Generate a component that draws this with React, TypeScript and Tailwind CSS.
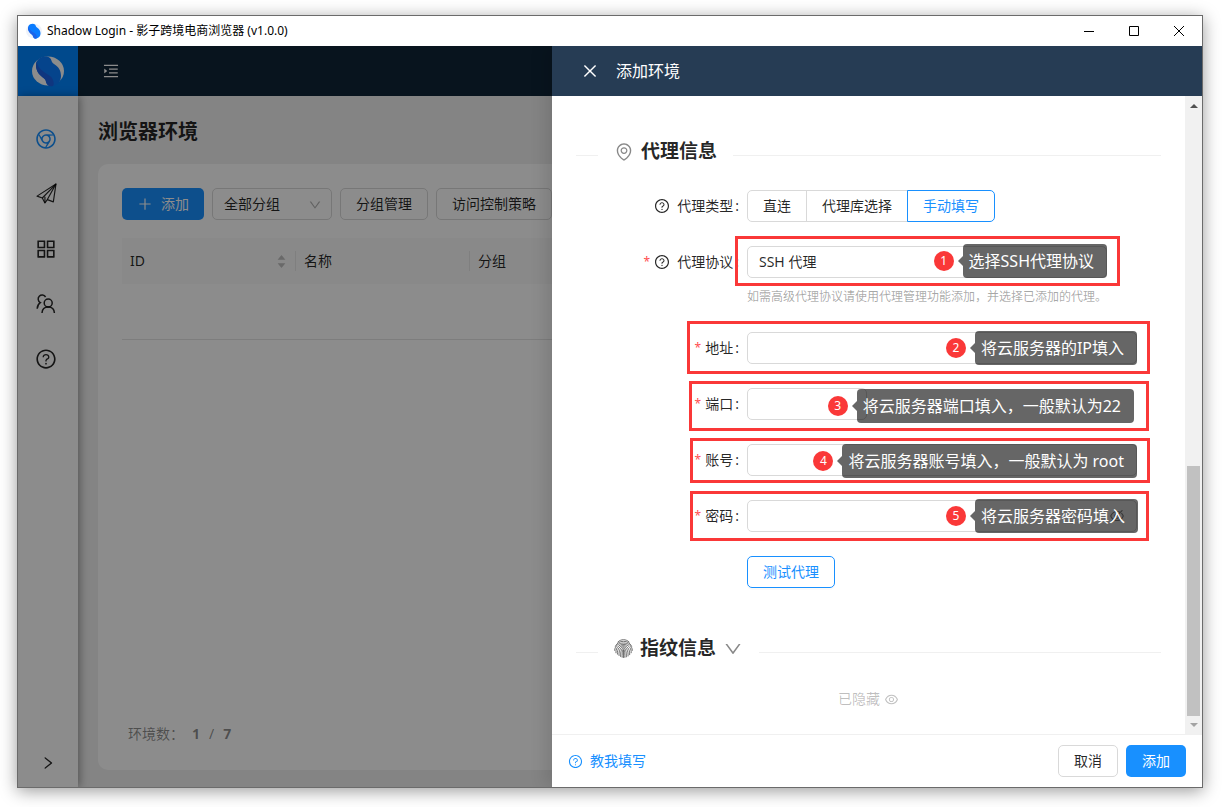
import type { ReactNode } from "react";
import {
  AiFillCaretDown,
  AiFillCaretUp,
  AiOutlineAppstore,
  AiOutlineChrome,
  AiOutlineClose,
  AiOutlineDown,
  AiOutlineEnvironment,
  AiOutlineEye,
  AiOutlineEyeInvisible,
  AiOutlineMenuUnfold,
  AiOutlinePlus,
  AiOutlineQuestionCircle,
  AiOutlineRight,
} from "react-icons/ai";

const inputClass =
  "h-8 rounded-[5px] border border-[#d9d9d9] bg-white px-[11px] text-sm outline-none focus:border-[#1890ff]";

const buttonClass =
  "h-8 rounded-[5px] border border-[#d9d9d9] bg-white px-[15px] text-sm whitespace-nowrap";

function SwirlMark({ className, plate }: { className: string; plate: string }) {
  return (
    <svg viewBox="0 0 32 32" className={className} aria-hidden="true">
      <ellipse cx="16" cy="16" rx="16" ry="14.5" fill={plate} />
      <path
        d="M5 6C7 2 14 0 18 3c2 2 1 4 4 6 5 3 7 7 7 12 0 5-3 9-8 10-4 1-6-1-7-4 0-3-3-4-6-7C4 16 3 10 5 6Z"
        fill="#0a7cff"
      />
      <path d="M5 6c0 5 3 8 7 11 4 3 8 4 9 8 1 3 1 5 0 6-4 1-6-1-7-4 0-3-3-4-6-7C4 16 3 10 5 6Z" fill="#1c63e8" />
    </svg>
  );
}

function PlaneIcon() {
  return (
    <svg viewBox="0 0 20 20" className="size-[21px]" fill="none" stroke="currentColor" strokeWidth="1.1" strokeLinejoin="round">
      <path d="M19 1 1 12.500l5 1.800 2.500 4.700 2.300-3.200 5.700 2.200L19 1Z" />
      <path d="M6 14.300 19 1l-8.200 14.800M8.500 19V13" />
    </svg>
  );
}

function UsersIcon() {
  return (
    <svg viewBox="0 0 20 20" className="size-5" fill="none" stroke="currentColor" strokeWidth="1.5">
      <path d="M9.6 3A4 4 0 1 0 4.3 8.6C2.400 9.800 1.300 12 1.200 14.800" />
      <circle cx="12.2" cy="9" r="4" />
      <path d="M6 19c.2-3.800 2.600-6 6.200-6s6 2.200 6.200 6" />
    </svg>
  );
}

function FingerprintIcon() {
  return (
    <svg viewBox="0 0 20 20" className="size-[19px]" fill="none" stroke="#444" strokeWidth="0.8" strokeLinecap="round">
      <path d="M4 3.200C7.500-.2 12.500-.2 16 3.200" />
      <path d="M1.500 7.500C4.500.6 15.500.6 18.500 7.500" />
      <path d="M.7 12C.7 1.500 19.300 1.500 19.300 12" />
      <path d="M2 14.500C1 2.600 19 2.600 18.100 14.500" />
      <path d="M3.600 16C2.600 3.800 17.400 3.800 16.500 16.500" />
      <path d="M5.300 17.400C4.300 5 15.700 5 14.800 17.900" />
      <path d="M7 18.500C6.300 6.200 13.700 6.200 13 18.800" />
      <path d="M8.600 19.200C8.200 7.600 11.800 7.600 11.400 19.300" />
      <path d="M10 12v7.500" />
    </svg>
  );
}

function TitleBar() {
  return (
    <div className="flex h-[30px] shrink-0 items-center bg-white">
      <SwirlMark className="ml-2 size-4" plate="#eef2fa" />
      <span className="ml-[5px] text-xs text-black">Shadow Login - 影子跨境电商浏览器 (v1.0.0)</span>
      <div className="ml-auto flex h-full pr-px text-black">
        <button aria-label="最小化" className="grid w-[45px] place-items-center">
          <svg viewBox="0 0 10 10" className="size-[10px]">
            <path d="M0 5.500h10" stroke="currentColor" />
          </svg>
        </button>
        <button aria-label="最大化" className="grid w-[45px] place-items-center">
          <svg viewBox="0 0 10 10" className="size-[10px]">
            <path d="M.5.5h9v9h-9z" stroke="currentColor" fill="none" />
          </svg>
        </button>
        <button aria-label="关闭窗口" className="grid w-[45px] place-items-center">
          <svg viewBox="0 0 10 10" className="size-[10px]">
            <path d="m0 0 10 10M10 0 0 10" stroke="currentColor" />
          </svg>
        </button>
      </div>
    </div>
  );
}

function Sidebar() {
  const items = [
    { label: "浏览器环境", icon: <AiOutlineChrome className="size-6 text-[#1890ff]" /> },
    { label: "发送", icon: <PlaneIcon /> },
    { label: "应用", icon: <AiOutlineAppstore className="size-6" /> },
    { label: "成员", icon: <UsersIcon /> },
    { label: "帮助", icon: <AiOutlineQuestionCircle className="size-[22px]" /> },
  ];
  return (
    <aside className="z-10 flex w-[60px] shrink-0 flex-col bg-white shadow-[2px_0_8px_rgba(0,0,0,0.35)]">
      <nav className="flex flex-col pt-[15px] pr-1">
        {items.map((item) => (
          <a key={item.label} href="#" aria-label={item.label} className="flex h-[55px] items-center justify-center">
            {item.icon}
          </a>
        ))}
      </nav>
      <button aria-label="展开" className="mt-auto grid h-12 place-items-center">
        <AiOutlineRight className="size-4" />
      </button>
    </aside>
  );
}

function EnvironmentList() {
  return (
    <main className="flex min-w-0 flex-1 flex-col bg-[#f0f0f0] px-5 pt-5 pb-[17px]">
      <h1 className="text-xl leading-8 font-bold">浏览器环境</h1>
      <section className="mt-4 flex flex-1 flex-col rounded-[10px] bg-white p-6">
        <div className="flex gap-2">
          <button className="flex h-8 items-center gap-2 rounded-[5px] bg-[#1890ff] px-[15px] text-sm whitespace-nowrap text-white">
            <AiOutlinePlus className="size-4" />
            添加
          </button>
          <div className="relative w-[120px] shrink-0">
            <select aria-label="分组" className={`${inputClass} w-full appearance-none`}>
              <option>全部分组</option>
            </select>
            <AiOutlineDown className="pointer-events-none absolute top-[10px] right-[10px] size-[14px] text-black/30" />
          </div>
          <button className={buttonClass}>分组管理</button>
          <button className={buttonClass}>访问控制策略</button>
        </div>
        <table className="mt-[18px] w-full table-fixed border-collapse text-left text-sm">
          <thead className="bg-[#fafafa]">
            <tr className="h-[46px]">
              <th className="w-[173px] px-2 font-normal">
                <div className="flex items-center justify-between">
                  ID
                  <span className="flex flex-col text-[#bfbfbf]">
                    <AiFillCaretUp className="-mb-[3px] size-[11px]" />
                    <AiFillCaretDown className="size-[11px]" />
                  </span>
                </div>
              </th>
              <th className="w-[174px] font-normal">
                <div className="border-l border-[#e8e8e8] px-2">名称</div>
              </th>
              <th className="font-normal">
                <div className="border-l border-[#e8e8e8] px-2">分组</div>
              </th>
            </tr>
          </thead>
          <tbody>
            <tr className="h-[55px] border-b border-[#e4e4e4]">
              <td />
              <td />
              <td />
            </tr>
          </tbody>
        </table>
        <p className="mt-auto flex items-center px-[6px] text-sm leading-6 text-black/45">
          环境数：
          <span className="ml-2 font-bold">1</span>
          <span className="mx-[9px]">/</span>
          <span className="font-bold">7</span>
        </p>
      </section>
    </main>
  );
}

function SectionTitle({ icon, children }: { icon: ReactNode; children: ReactNode }) {
  return (
    <div className="flex h-[33px] items-center">
      <span className="mt-2 h-px w-[22px] bg-[#f0f0f0]" />
      <h2 className="mx-4 flex items-center gap-[7px] text-[19px] font-bold">
        {icon}
        {children}
      </h2>
      <span className="mt-2 h-px flex-1 bg-[#f0f0f0]" />
    </div>
  );
}

type FieldProps = {
  label: string;
  htmlFor?: string;
  required?: boolean;
  help?: boolean;
  frame?: string;
  step?: number;
  note?: string;
  children: ReactNode;
};

function Field({ label, htmlFor, required, help, frame, step, note, children }: FieldProps) {
  return (
    <div className="relative flex">
      <label htmlFor={htmlFor} className="flex h-8 w-[171px] shrink-0 items-center justify-end pr-2 text-sm">
        {required && <span className="mr-1 text-xs text-[#ff4d4f]">*</span>}
        {help && <AiOutlineQuestionCircle className="mr-[7px] size-4" />}
        {label}
        <span className="ml-[2px]">:</span>
      </label>
      <div>{children}</div>
      {frame && (
        <div
          className={`pointer-events-none absolute flex items-center justify-end border-3 border-[#fa3838] ${frame}`}
        >
          <span className="grid size-5 place-items-center rounded-full bg-[#fa3838] text-xs text-white">{step}</span>
          <span className="ml-1 border-y-[5px] border-r-[5px] border-y-transparent border-r-black/60" />
          <span className="h-[34px] rounded bg-black/60 pr-[13px] pl-[6px] text-base leading-[34px] whitespace-nowrap text-white">
            {note}
          </span>
        </div>
      )}
    </div>
  );
}

function ProxyForm() {
  const types = [
    { label: "直连", style: "rounded-l-[5px] border-[#d9d9d9]" },
    { label: "代理库选择", style: "-ml-px border-[#d9d9d9]" },
    { label: "手动填写", style: "-ml-px rounded-r-[5px] border-[#1890ff] text-[#1890ff]" },
  ];
  return (
    <form className="mt-[22px] flex flex-col gap-6">
      <Field label="代理类型" help>
        <div className="flex">
          {types.map((type) => (
            <label
              key={type.label}
              className={`flex h-8 cursor-pointer items-center border px-[15px] text-sm ${type.style}`}
            >
              <input
                type="radio"
                name="proxyType"
                className="sr-only"
                defaultChecked={type.label === "手动填写"}
              />
              {type.label}
            </label>
          ))}
        </div>
      </Field>
      <Field
        label="代理协议"
        htmlFor="protocol"
        required
        help
        frame="-top-[10px] left-[159px] h-[50px] w-[385px] pr-[10px]"
        step={1}
        note="选择SSH代理协议"
      >
        <select id="protocol" className={`${inputClass} w-[360px] appearance-none`}>
          <option>SSH 代理</option>
        </select>
        <p className="pt-2 text-xs leading-[22px] text-black/35">
          如需高级代理协议请使用代理管理功能添加，并选择已添加的代理。
        </p>
      </Field>
      <Field
        label="地址"
        htmlFor="host"
        required
        frame="-top-[11px] left-[111px] h-[53px] w-[463px] pr-[10px]"
        step={2}
        note="将云服务器的IP填入"
      >
        <input id="host" className={`${inputClass} w-[390px]`} />
      </Field>
      <Field
        label="端口"
        htmlFor="port"
        required
        frame="-top-[7px] left-[113px] h-[50px] w-[460px] pr-3"
        step={3}
        note="将云服务器端口填入，一般默认为22"
      >
        <input id="port" className={`${inputClass} w-[120px]`} />
      </Field>
      <Field
        label="账号"
        htmlFor="account"
        required
        frame="-top-[6px] left-[114px] h-[45px] w-[460px] pr-[10px]"
        step={4}
        note="将云服务器账号填入，一般默认为 root"
      >
        <input id="account" className={`${inputClass} w-[390px]`} />
      </Field>
      <Field
        label="密码"
        htmlFor="password"
        required
        frame="-top-[9px] left-[114px] h-[50px] w-[459px] pr-2"
        step={5}
        note="将云服务器密码填入"
      >
        <div className="relative">
          <input id="password" type="password" className={`${inputClass} w-[390px]`} />
          <AiOutlineEyeInvisible className="absolute top-2 right-3 size-4 text-black/45" />
        </div>
      </Field>
      <button
        type="button"
        className="ml-[171px] h-8 self-start rounded-[5px] border border-[#1890ff] px-[15px] text-sm text-[#1890ff] shadow-[0_2px_0_rgba(0,0,0,0.02)]"
      >
        测试代理
      </button>
    </form>
  );
}

function ScrollTrack() {
  return (
    <div className="flex w-[17px] shrink-0 flex-col items-center bg-[#f1f1f1]">
      <span className="my-2 border-x-4 border-b-4 border-x-transparent border-b-[#505050]" />
      <div className="grow-352" />
      <div className="w-[13px] grow-251 bg-[#c1c1c1]" />
      <span className="my-[7px] border-x-4 border-t-4 border-x-transparent border-t-[#a3a3a3]" />
    </div>
  );
}

function AddDrawer() {
  return (
    <div className="absolute inset-y-0 right-0 z-30 flex w-[650px] max-w-full flex-col bg-white shadow-[-6px_0_16px_rgba(0,0,0,0.12)]">
      <header className="flex h-[50px] shrink-0 items-center bg-[#263c54] pl-[29px] text-white">
        <button aria-label="关闭">
          <AiOutlineClose className="size-[18px]" />
        </button>
        <h2 className="ml-[17px] text-base">添加环境</h2>
      </header>
      <div className="flex min-h-0 flex-1">
        <div className="flex-1 overflow-hidden px-6 pt-[39px]">
          <SectionTitle icon={<AiOutlineEnvironment className="size-5 text-[#888]" />}>代理信息</SectionTitle>
          <ProxyForm />
          <div className="mt-11">
            <SectionTitle icon={<FingerprintIcon />}>
              指纹信息
              <AiOutlineDown className="size-5 text-[#888]" />
            </SectionTitle>
          </div>
          <p className="mt-[22px] flex items-center justify-center gap-1 text-sm leading-6 text-black/25">
            已隐藏
            <AiOutlineEye className="size-[15px]" />
          </p>
        </div>
        <ScrollTrack />
      </div>
      <footer className="flex h-[53px] shrink-0 items-center gap-2 border-t border-[#f0f0f0] px-4">
        <a href="#" className="mr-auto flex items-center gap-[7px] text-sm text-[#1890ff]">
          <AiOutlineQuestionCircle className="size-[15px]" />
          教我填写
        </a>
        <button className={buttonClass}>取消</button>
        <button className="h-8 rounded-[5px] bg-[#1890ff] px-4 text-sm text-white">添加</button>
      </footer>
    </div>
  );
}

export default function App() {
  return (
    <div className="flex h-screen bg-white pt-[15px] pr-5 pb-[19px] pl-[17px] font-['Noto_Sans','Noto_Sans_CJK_SC',sans-serif] text-black/85">
      <div className="flex min-w-0 flex-1 flex-col border border-[#6b6b6b] shadow-[0_3px_16px_rgba(0,0,0,0.4)]">
        <TitleBar />
        <div className="relative flex min-h-0 flex-1 flex-col overflow-hidden">
          <header className="flex h-[50px] shrink-0 items-center bg-[#0f2638]">
            <div className="grid h-full w-[60px] place-items-center bg-[#0085ff]">
              <SwirlMark className="size-8" plate="#ffffff" />
            </div>
            <button aria-label="展开菜单" className="ml-6 text-white">
              <AiOutlineMenuUnfold className="size-[18px]" />
            </button>
          </header>
          <div className="flex min-h-0 flex-1">
            <Sidebar />
            <EnvironmentList />
          </div>
          <div className="absolute inset-0 z-20 bg-black/45" />
          <AddDrawer />
        </div>
      </div>
    </div>
  );
}
